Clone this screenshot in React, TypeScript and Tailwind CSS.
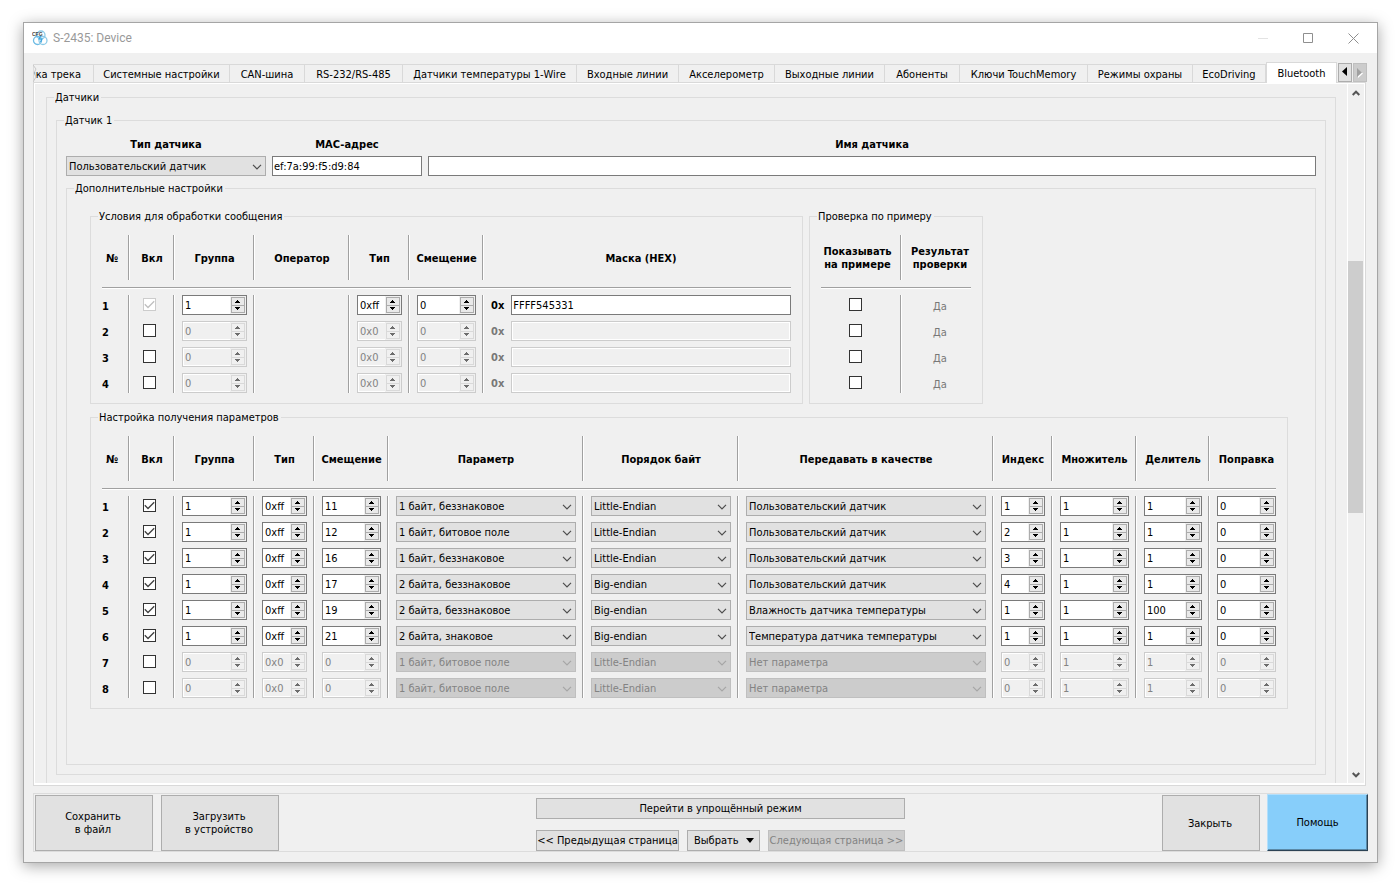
import { ReactNode } from 'react';
import clsx from 'clsx';

type Tab = { title: string; width: string };

const TABS: Tab[] = [
  { title: 'Системные настройки', width: 'w-[136px]' },
  { title: 'CAN-шина', width: 'w-[75px]' },
  { title: 'RS-232/RS-485', width: 'w-[98px]' },
  { title: 'Датчики температуры 1-Wire', width: 'w-[174px]' },
  { title: 'Входные линии', width: 'w-[102px]' },
  { title: 'Акселерометр', width: 'w-24' },
  { title: 'Выходные линии', width: 'w-[110px]' },
  { title: 'Абоненты', width: 'w-[75px]' },
  { title: 'Ключи TouchMemory', width: 'w-32' },
  { title: 'Режимы охраны', width: 'w-[105px]' },
  { title: 'EcoDriving', width: 'w-[73px]' },
];

type Condition = { on: boolean; group: string; type: string; offset: string; mask: string };

const CONDITIONS: Condition[] = [
  { on: true, group: '1', type: '0xff', offset: '0', mask: 'FFFF545331' },
  { on: false, group: '0', type: '0x0', offset: '0', mask: '' },
  { on: false, group: '0', type: '0x0', offset: '0', mask: '' },
  { on: false, group: '0', type: '0x0', offset: '0', mask: '' },
];

type Param = {
  on: boolean;
  group: string;
  type: string;
  offset: string;
  param: string;
  order: string;
  sendAs: string;
  index: string;
  mul: string;
  div: string;
  fix: string;
};

const SENSOR = 'Пользовательский датчик';

const PARAMS: Param[] = [
  { on: true, group: '1', type: '0xff', offset: '11', param: '1 байт, беззнаковое', order: 'Little-Endian', sendAs: SENSOR, index: '1', mul: '1', div: '1', fix: '0' },
  { on: true, group: '1', type: '0xff', offset: '12', param: '1 байт, битовое поле', order: 'Little-Endian', sendAs: SENSOR, index: '2', mul: '1', div: '1', fix: '0' },
  { on: true, group: '1', type: '0xff', offset: '16', param: '1 байт, беззнаковое', order: 'Little-Endian', sendAs: SENSOR, index: '3', mul: '1', div: '1', fix: '0' },
  { on: true, group: '1', type: '0xff', offset: '17', param: '2 байта, беззнаковое', order: 'Big-endian', sendAs: SENSOR, index: '4', mul: '1', div: '1', fix: '0' },
  { on: true, group: '1', type: '0xff', offset: '19', param: '2 байта, беззнаковое', order: 'Big-endian', sendAs: 'Влажность датчика температуры', index: '1', mul: '1', div: '100', fix: '0' },
  { on: true, group: '1', type: '0xff', offset: '21', param: '2 байта, знаковое', order: 'Big-endian', sendAs: 'Температура датчика температуры', index: '1', mul: '1', div: '1', fix: '0' },
  { on: false, group: '0', type: '0x0', offset: '0', param: '1 байт, битовое поле', order: 'Little-Endian', sendAs: 'Нет параметра', index: '0', mul: '1', div: '1', fix: '0' },
  { on: false, group: '0', type: '0x0', offset: '0', param: '1 байт, битовое поле', order: 'Little-Endian', sendAs: 'Нет параметра', index: '0', mul: '1', div: '1', fix: '0' },
];

function Arrow({ down }: { down?: boolean }) {
  return (
    <svg width="5" height="3" viewBox="0 0 5 3" shapeRendering="crispEdges" fill="currentColor">
      {down ? <path d="M0 0h5v1H0zM1 1h3v1H1zM2 2h1v1H2z" /> : <path d="M2 0h1v1H2zM1 1h3v1H1zM0 2h5v1H0z" />}
    </svg>
  );
}

function Spin({ label, value, disabled }: { label: string; value: string; disabled?: boolean }) {
  const btn = clsx(
    'flex w-full flex-1 items-center justify-center pr-px',
    disabled ? 'bg-[#f0f0f0] text-[#6d6d6d]' : 'bg-[#e9e9e9] text-black',
  );
  return (
    <div
      className={clsx(
        'flex h-5 border',
        disabled ? 'border-[#cccccc] bg-[#f0f0f0] shadow-[inset_0_0_0_1px_#fff]' : 'border-[#7a7a7a] bg-white',
      )}
    >
      <input
        type="text"
        aria-label={label}
        defaultValue={value}
        disabled={disabled}
        className="w-0 min-w-0 flex-1 bg-transparent pt-px pl-0.5 text-black outline-none disabled:text-[#838383]"
      />
      <div className="w-4 bg-[#f0f0f0] p-px">
        <div
          className={clsx(
            'flex h-full flex-col divide-y border',
            disabled ? 'divide-[#d9d9d9] border-[#d9d9d9]' : 'divide-[#acacac] border-[#acacac]',
          )}
        >
          <button type="button" aria-label={`${label}: больше`} disabled={disabled} className={btn}>
            <Arrow />
          </button>
          <button type="button" aria-label={`${label}: меньше`} disabled={disabled} className={btn}>
            <Arrow down />
          </button>
        </div>
      </div>
    </div>
  );
}

function Combo({ label, value, options, disabled }: { label: string; value: string; options: string[]; disabled?: boolean }) {
  return (
    <div className="relative">
      <select
        aria-label={label}
        defaultValue={value}
        disabled={disabled}
        className="block h-5 w-full appearance-none border border-[#adadad] bg-[#e1e1e1] pt-px pr-4 pb-0 pl-0.5 text-black opacity-100 outline-none disabled:border-[#bfbfbf] disabled:bg-[#cccccc] disabled:text-[#838383]"
      >
        {options.map((o) => (
          <option key={o}>{o}</option>
        ))}
      </select>
      <svg
        width="10"
        height="6"
        viewBox="0 0 10 6"
        fill="none"
        stroke={disabled ? '#a6a6a6' : '#4d4d4d'}
        strokeWidth="1.2"
        className="pointer-events-none absolute top-2 right-1"
      >
        <path d="M1 .8l4 4 4-4" />
      </svg>
    </div>
  );
}

function Check({ label, checked, disabled }: { label: string; checked?: boolean; disabled?: boolean }) {
  return (
    <div className="flex justify-center pt-[3px] pr-[5px]">
      <span className="relative block size-[13px]">
        <input
          type="checkbox"
          aria-label={label}
          defaultChecked={checked}
          disabled={disabled}
          className="peer block size-[13px] appearance-none border border-[#333333] bg-white disabled:border-[#cccccc]"
        />
        <svg
          width="13"
          height="13"
          viewBox="0 0 13 13"
          fill="none"
          stroke={disabled ? '#bfbfbf' : '#404040'}
          strokeWidth="1.3"
          className="pointer-events-none invisible absolute inset-0 peer-checked:visible"
        >
          <path d="M1.8 6.3l3.2 3.2 6.2-6.2" />
        </svg>
      </span>
    </div>
  );
}

function Group({ title, className, body, children }: { title: string; className?: string; body: string; children: ReactNode }) {
  return (
    <fieldset className={clsx('min-w-0 border border-[#dcdcdc]', className)}>
      <legend className="ml-[7px] pr-0.5 pl-px whitespace-nowrap">{title}</legend>
      <div className={body}>{children}</div>
    </fieldset>
  );
}

// Etched separators: grey line with a white highlight on its right
const LINE = 'border-l border-[#a0a0a0] pl-2 shadow-[inset_1px_0_0_#fff]';

function Grid({ cols, heads, className, children }: { cols: string[]; heads: ReactNode[]; className?: string; children: ReactNode }) {
  return (
    <table className={clsx('table-fixed border-separate border-spacing-0', className)}>
      <colgroup>
        {cols.map((c, i) => (
          <col key={i} className={c} />
        ))}
      </colgroup>
      <thead>
        <tr>
          {heads.map((h, i) => (
            <th
              key={i}
              className={clsx('h-[45px] p-0 align-middle font-bold whitespace-nowrap', i > 0 && LINE, i < heads.length - 1 && 'pr-1.5')}
            >
              <div className="flex justify-center pt-px text-center">{h}</div>
            </th>
          ))}
        </tr>
        <tr>
          <td colSpan={cols.length} className="h-[15px] p-0">
            <div className="h-0.5 border-t border-[#a0a0a0] bg-white" />
          </td>
        </tr>
      </thead>
      <tbody>{children}</tbody>
    </table>
  );
}

function Cell({ first, last, end, children }: { first?: boolean; last?: boolean; end?: boolean; children?: ReactNode }) {
  return (
    <td className={clsx('p-0 align-top', end ? 'h-5' : 'h-[26px]', !first && LINE, !last && 'pr-1.5')}>{children}</td>
  );
}

function Logo() {
  return (
    <svg width="16" height="16" viewBox="0 0 16 16" fill="none">
      <circle cx="9" cy="5" r="4" stroke="#8ecbe8" strokeWidth="1.3" />
      <circle cx="5.5" cy="10.5" r="4" stroke="#6fbce4" strokeWidth="1.3" />
      <circle cx="11" cy="10.5" r="4" stroke="#8ecbe8" strokeWidth="1.3" />
      <path d="M9 5.5L7 9h3l-1.5 3" stroke="#3da5de" strokeWidth="1.2" />
      <text x="0" y="6" fontSize="5" fontWeight="700" fill="#444" fontFamily="Liberation Sans, sans-serif">
        CFG
      </text>
    </svg>
  );
}

function TitleBar() {
  return (
    <header className="flex h-[30px] items-center bg-white pr-[18px] pl-2">
      <Logo />
      <h1 className="ml-[5px] flex-1 font-[Roboto,sans-serif] text-xs text-[#999999]">S-2435: Device</h1>
      <div className="flex items-center gap-[35px] text-[#8f8f8f]">
        <button type="button" aria-label="Свернуть" disabled>
          <svg width="10" height="10" viewBox="0 0 10 10" stroke="#e3e3e3">
            <path d="M0 5.5h10" />
          </svg>
        </button>
        <button type="button" aria-label="Развернуть">
          <svg width="10" height="10" viewBox="0 0 10 10" fill="none" stroke="currentColor">
            <path d="M.5.5h9v9h-9z" />
          </svg>
        </button>
        <button type="button" aria-label="Закрыть окно">
          <svg width="11" height="11" viewBox="0 0 11 11" fill="none" stroke="currentColor">
            <path d="M.5.5l10 10M10.5.5l-10 10" />
          </svg>
        </button>
      </div>
    </header>
  );
}

function TabBar() {
  const tab = 'h-[18px] shrink-0 border-t border-r border-[#d9d9d9] pt-px whitespace-nowrap';
  return (
    <nav className="flex h-5 items-end">
      <button type="button" className={clsx(tab, 'relative flex w-[61px] items-center justify-end overflow-hidden pr-3')}>
        <span>Настройка трека</span>
        <svg width="4" height="18" viewBox="0 0 4 18" fill="#f0f0f0" stroke="#c8c8c8" className="absolute top-0 left-0">
          <path d="M0 0l3 4-2 4 2 4-3 5z" />
        </svg>
      </button>
      {TABS.map((t) => (
        <button key={t.title} type="button" className={clsx(tab, 'text-center', t.width)}>
          {t.title}
        </button>
      ))}
      <button
        type="button"
        className="relative z-10 -mb-px h-[21px] w-[71px] shrink-0 border border-b-0 border-[#d9d9d9] bg-white text-center"
      >
        Bluetooth
      </button>
      <div className="ml-px flex gap-px">
        <button
          type="button"
          aria-label="Предыдущие вкладки"
          className="flex h-[19px] w-3.5 items-center justify-center border border-[#adadad] bg-[#e1e1e1] pr-px pb-0.5"
        >
          <svg width="5" height="9" viewBox="0 0 5 9">
            <path d="M5 0v9L0 4.5z" />
          </svg>
        </button>
        <button
          type="button"
          aria-label="Следующие вкладки"
          disabled
          className="flex h-[19px] w-3.5 items-center justify-center border border-[#bfbfbf] bg-[#cccccc]"
        >
          <svg width="6" height="10" viewBox="0 0 6 10">
            <path d="M1 1v9l5-4.5z" fill="#fff" />
            <path d="M0 0v9l5-4.5z" fill="#a0a0a0" />
          </svg>
        </button>
      </div>
    </nav>
  );
}

function ScrollBar() {
  return (
    <div className="flex w-[17px] shrink-0 flex-col border-l border-white bg-[#f0f0f0]">
      <button type="button" aria-label="Вверх" className="flex h-[17px] items-center justify-center pr-px">
        <svg width="8" height="6" viewBox="0 0 8 6" fill="none" stroke="#555" strokeWidth="2">
          <path d="M.7 5L4 1.7 7.3 5" />
        </svg>
      </button>
      <div className="grow-[160]" />
      <div className="mr-px grow-[252] bg-[#cdcdcd]" />
      <div className="grow-[253]" />
      <button type="button" aria-label="Вниз" className="flex h-[17px] items-center justify-center pr-px">
        <svg width="8" height="6" viewBox="0 0 8 6" fill="none" stroke="#555" strokeWidth="2">
          <path d="M.7 1L4 4.3 7.3 1" />
        </svg>
      </button>
    </div>
  );
}

function Conditions() {
  return (
    <Group title="Условия для обработки сообщения" body="px-[11px] pt-3 pb-2.5">
      <Grid
        className="w-[689px]"
        cols={['w-[26px]', 'w-[45px]', 'w-20', 'w-[95px]', 'w-[60px]', 'w-[74px]', 'w-[309px]']}
        heads={['№', 'Вкл', 'Группа', 'Оператор', 'Тип', 'Смещение', 'Маска (HEX)']}
      >
        {CONDITIONS.map((c, i) => {
          const end = i === CONDITIONS.length - 1;
          return (
            <tr key={i}>
              <Cell first end={end}>
                <b className="block pt-[5px]">{i + 1}</b>
              </Cell>
              <Cell end={end}>
                <Check label={`Условие ${i + 1}`} checked={c.on} disabled={c.on} />
              </Cell>
              <Cell end={end}>
                <Spin label="Группа" value={c.group} disabled={!c.on} />
              </Cell>
              <Cell end={end} />
              <Cell end={end}>
                <Spin label="Тип" value={c.type} disabled={!c.on} />
              </Cell>
              <Cell end={end}>
                <Spin label="Смещение" value={c.offset} disabled={!c.on} />
              </Cell>
              <Cell last end={end}>
                <label className="flex items-center gap-[7px]">
                  <b className={clsx('pt-px', !c.on && 'text-[#787878]')}>0x</b>
                  <input
                    type="text"
                    defaultValue={c.mask}
                    disabled={!c.on}
                    className="h-5 min-w-0 flex-1 border border-[#7a7a7a] bg-white px-px pt-px outline-none disabled:border-[#cccccc] disabled:bg-[#f0f0f0] disabled:shadow-[inset_0_0_0_1px_#fff]"
                  />
                </label>
              </Cell>
            </tr>
          );
        })}
      </Grid>
    </Group>
  );
}

function Example() {
  return (
    <Group title="Проверка по примеру" body="px-[11px] pt-3 pb-2.5">
      <Grid
        className="w-[150px]"
        cols={['w-[79px]', 'w-[71px]']}
        heads={[
          <span>
            Показывать
            <br />
            на примере
          </span>,
          <span>
            Результат
            <br />
            проверки
          </span>,
        ]}
      >
        {CONDITIONS.map((_, i) => {
          const end = i === CONDITIONS.length - 1;
          return (
            <tr key={i}>
              <Cell first end={end}>
                <Check label={`Показывать на примере ${i + 1}`} />
              </Cell>
              <Cell last end={end}>
                <div className="pt-[5px] text-center text-[#787878]">Да</div>
              </Cell>
            </tr>
          );
        })}
      </Grid>
    </Group>
  );
}

function Params() {
  const options = (key: 'param' | 'order' | 'sendAs') => [...new Set(PARAMS.map((p) => p[key]))];

  return (
    <Group title="Настройка получения параметров" className="mt-[7px] w-max" body="px-[11px] pt-3 pb-2.5">
      <Grid
        className="w-[1174px]"
        cols={[
          'w-[26px]',
          'w-[45px]',
          'w-20',
          'w-[60px]',
          'w-[74px]',
          'w-[195px]',
          'w-[155px]',
          'w-[255px]',
          'w-[59px]',
          'w-[84px]',
          'w-[73px]',
          'w-[68px]',
        ]}
        heads={['№', 'Вкл', 'Группа', 'Тип', 'Смещение', 'Параметр', 'Порядок байт', 'Передавать в качестве', 'Индекс', 'Множитель', 'Делитель', 'Поправка']}
      >
        {PARAMS.map((p, i) => {
          const end = i === PARAMS.length - 1;
          const off = !p.on;
          return (
            <tr key={i}>
              <Cell first end={end}>
                <b className="block pt-[5px]">{i + 1}</b>
              </Cell>
              <Cell end={end}>
                <Check label={`Параметр ${i + 1}`} checked={p.on} />
              </Cell>
              <Cell end={end}>
                <Spin label="Группа" value={p.group} disabled={off} />
              </Cell>
              <Cell end={end}>
                <Spin label="Тип" value={p.type} disabled={off} />
              </Cell>
              <Cell end={end}>
                <Spin label="Смещение" value={p.offset} disabled={off} />
              </Cell>
              <Cell end={end}>
                <Combo label="Параметр" value={p.param} options={options('param')} disabled={off} />
              </Cell>
              <Cell end={end}>
                <Combo label="Порядок байт" value={p.order} options={options('order')} disabled={off} />
              </Cell>
              <Cell end={end}>
                <Combo label="Передавать в качестве" value={p.sendAs} options={options('sendAs')} disabled={off} />
              </Cell>
              <Cell end={end}>
                <Spin label="Индекс" value={p.index} disabled={off} />
              </Cell>
              <Cell end={end}>
                <Spin label="Множитель" value={p.mul} disabled={off} />
              </Cell>
              <Cell end={end}>
                <Spin label="Делитель" value={p.div} disabled={off} />
              </Cell>
              <Cell last end={end}>
                <Spin label="Поправка" value={p.fix} disabled={off} />
              </Cell>
            </tr>
          );
        })}
      </Grid>
    </Group>
  );
}

function Footer() {
  const btn = 'border border-[#adadad] bg-[#e1e1e1] text-center whitespace-nowrap disabled:border-[#bfbfbf] disabled:bg-[#cccccc] disabled:text-[#838383]';
  return (
    <footer className="mt-[7px] flex justify-between border border-r-0 border-[#dcdcdc]">
      <div className="flex gap-2 pt-px pl-px">
        <button type="button" className={clsx(btn, 'h-14 w-[118px] pr-0.5')}>
          Сохранить
          <br />в файл
        </button>
        <button type="button" className={clsx(btn, 'h-14 w-[118px] pr-0.5')}>
          Загрузить
          <br />в устройство
        </button>
      </div>
      <div className="flex w-[369px] flex-col justify-between pt-1">
        <button type="button" className={clsx(btn, 'h-[21px]')}>
          Перейти в упрощённый режим
        </button>
        <div className="flex gap-2">
          <button type="button" className={clsx(btn, 'h-[21px] w-[143px]')}>
            &lt;&lt; Предыдущая страница
          </button>
          <button type="button" className={clsx(btn, 'flex h-[21px] w-[73px] items-center justify-between pr-[5px] pl-1.5')}>
            Выбрать
            <svg width="8" height="5" viewBox="0 0 8 5">
              <path d="M0 0h8L4 5z" />
            </svg>
          </button>
          <button type="button" disabled className={clsx(btn, 'h-[21px] flex-1')}>
            Следующая страница &gt;&gt;
          </button>
        </div>
      </div>
      <div className="flex gap-[7px]">
        <button type="button" className={clsx(btn, 'mt-px h-14 w-[98px] pr-0.5')}>
          Закрыть
        </button>
        <button
          type="button"
          className="h-[57px] w-[101px] border border-t-[#b3dffb] border-r-[#2b4254] border-b-[#2b4254] border-l-[#b3dffb] bg-[#87cefa] text-center shadow-[inset_-1px_-1px_0_#5b8aa8]"
        >
          Помощь
        </button>
      </div>
    </footer>
  );
}

export default function App() {
  return (
    <div className="flex min-h-screen min-w-max bg-white pt-[22px] pr-[18px] pb-[21px] pl-[23px] font-['DejaVu_Sans_Condensed','DejaVu_Sans',sans-serif] text-[11px] leading-[13px] text-black">
      <div className="flex flex-1 flex-col border border-[#a5a5a5] bg-[#f0f0f0] shadow-[0_3px_14px_rgba(0,0,0,0.35)]">
        <TitleBar />
        <div className="flex flex-1 flex-col px-[9px] pt-[9px] pb-2.5">
          <TabBar />
          <main className="mr-0.5 flex flex-1 border border-[#d9d9d9] bg-white p-px pb-0.5">
            <div className="flex-1 bg-[#f0f0f0] px-[11px] pt-[7px]">
              <Group title="Датчики" className="border-b-0" body="px-[9px] pt-2.5 pb-2">
                <Group title="Датчик 1" body="px-[9px] pt-[11px] pb-[9px]">
                  <div className="flex gap-1.5 pb-1.5">
                    <div className="flex w-[200px] flex-col gap-[5px]">
                      <b className="text-center">Тип датчика</b>
                      <Combo label="Тип датчика" value={SENSOR} options={[SENSOR]} />
                    </div>
                    <label className="flex w-[150px] flex-col gap-[5px]">
                      <b className="text-center">MAC-адрес</b>
                      <input
                        type="text"
                        defaultValue="ef:7a:99:f5:d9:84"
                        className="h-5 border border-[#7a7a7a] bg-white px-px pt-px outline-none"
                      />
                    </label>
                    <label className="flex flex-1 flex-col gap-[5px]">
                      <b className="text-center">Имя датчика</b>
                      <input type="text" className="h-5 border border-[#7a7a7a] bg-white px-px outline-none" />
                    </label>
                  </div>
                  <Group title="Дополнительные настройки" body="px-[23px] pt-[15px] pb-[55px]">
                    <div className="flex gap-1.5">
                      <Conditions />
                      <Example />
                    </div>
                    <Params />
                  </Group>
                </Group>
              </Group>
            </div>
            <ScrollBar />
          </main>
          <Footer />
        </div>
      </div>
    </div>
  );
}
